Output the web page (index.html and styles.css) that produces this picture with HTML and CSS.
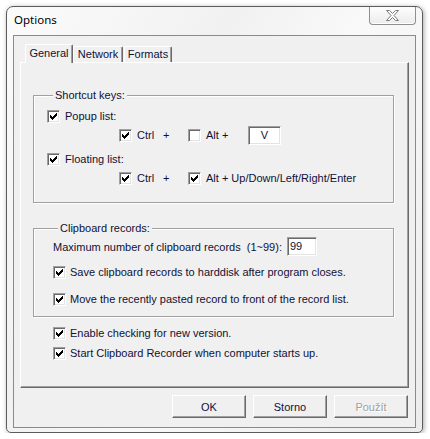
FILE: index.html
```html
<!DOCTYPE html>
<html>
<head>
    <title>Options</title>
    <link rel="stylesheet" href="styles.css">
</head>
<body>
    <div class="window">
        <div class="titlebar">
            <span class="title">Options</span>
            <div class="close">
                <svg width="13" height="11" viewBox="0 0 13 11">
                    <polygon points="0.5,0.5 3.5,0.5 6.5,3.5 9.5,0.5 12.5,0.5 8,5.5 12.5,10.5 9.5,10.5 6.5,7.5 3.5,10.5 0.5,10.5 5,5.5" fill="#fff" stroke="#7a7a7a" stroke-width="1"/>
                </svg>
            </div>
        </div>
        <div class="client">
            <div class="tabs">
                <div class="tab active">General</div>
                <div class="tab t-network">Network</div>
                <div class="tab t-formats">Formats</div>
            </div>
            <div class="panel">
                <fieldset class="group shortcuts">
                    <legend>Shortcut keys:</legend>
                    <div class="row r-popup">
                        <span class="check on"><svg width="7" height="7" viewBox="0 0 7 7"><path d="M0 2h1v3h-1zM1 3h1v3h-1zM2 4h1v3h-1zM3 3h1v3h-1zM4 2h1v3h-1zM5 1h1v3h-1zM6 0h1v3h-1z"/></svg></span>
                        <span class="text">Popup list:</span>
                    </div>
                    <div class="row keys r-keys1">
                        <span class="check on"><svg width="7" height="7" viewBox="0 0 7 7"><path d="M0 2h1v3h-1zM1 3h1v3h-1zM2 4h1v3h-1zM3 3h1v3h-1zM4 2h1v3h-1zM5 1h1v3h-1zM6 0h1v3h-1z"/></svg></span>
                        <span class="text k-ctrl">Ctrl</span>
                        <span class="text k-plus">+</span>
                        <span class="check"></span>
                        <span class="text k-alt">Alt +</span>
                        <span class="edit key-edit">V</span>
                    </div>
                    <div class="row r-floating">
                        <span class="check on"><svg width="7" height="7" viewBox="0 0 7 7"><path d="M0 2h1v3h-1zM1 3h1v3h-1zM2 4h1v3h-1zM3 3h1v3h-1zM4 2h1v3h-1zM5 1h1v3h-1zM6 0h1v3h-1z"/></svg></span>
                        <span class="text">Floating list:</span>
                    </div>
                    <div class="row keys r-keys2">
                        <span class="check on"><svg width="7" height="7" viewBox="0 0 7 7"><path d="M0 2h1v3h-1zM1 3h1v3h-1zM2 4h1v3h-1zM3 3h1v3h-1zM4 2h1v3h-1zM5 1h1v3h-1zM6 0h1v3h-1z"/></svg></span>
                        <span class="text k-ctrl">Ctrl</span>
                        <span class="text k-plus">+</span>
                        <span class="check on"><svg width="7" height="7" viewBox="0 0 7 7"><path d="M0 2h1v3h-1zM1 3h1v3h-1zM2 4h1v3h-1zM3 3h1v3h-1zM4 2h1v3h-1zM5 1h1v3h-1zM6 0h1v3h-1z"/></svg></span>
                        <span class="text">Alt + Up/Down/Left/Right/Enter</span>
                    </div>
                </fieldset>

                <fieldset class="group records">
                    <legend>Clipboard records:</legend>
                    <div class="row r-max">
                        <span class="text max-label">Maximum number of clipboard records&nbsp; (1~99):</span>
                        <span class="edit max-edit">99</span>
                    </div>
                    <div class="row r-save">
                        <span class="check on"><svg width="7" height="7" viewBox="0 0 7 7"><path d="M0 2h1v3h-1zM1 3h1v3h-1zM2 4h1v3h-1zM3 3h1v3h-1zM4 2h1v3h-1zM5 1h1v3h-1zM6 0h1v3h-1z"/></svg></span>
                        <span class="text">Save clipboard records to harddisk after program closes.</span>
                    </div>
                    <div class="row r-move">
                        <span class="check on"><svg width="7" height="7" viewBox="0 0 7 7"><path d="M0 2h1v3h-1zM1 3h1v3h-1zM2 4h1v3h-1zM3 3h1v3h-1zM4 2h1v3h-1zM5 1h1v3h-1zM6 0h1v3h-1z"/></svg></span>
                        <span class="text">Move the recently pasted record to front of the record list.</span>
                    </div>
                </fieldset>

                <div class="row r-enable">
                    <span class="check on"><svg width="7" height="7" viewBox="0 0 7 7"><path d="M0 2h1v3h-1zM1 3h1v3h-1zM2 4h1v3h-1zM3 3h1v3h-1zM4 2h1v3h-1zM5 1h1v3h-1zM6 0h1v3h-1z"/></svg></span>
                    <span class="text">Enable checking for new version.</span>
                </div>
                <div class="row r-start">
                    <span class="check on"><svg width="7" height="7" viewBox="0 0 7 7"><path d="M0 2h1v3h-1zM1 3h1v3h-1zM2 4h1v3h-1zM3 3h1v3h-1zM4 2h1v3h-1zM5 1h1v3h-1zM6 0h1v3h-1z"/></svg></span>
                    <span class="text">Start Clipboard Recorder when computer starts up.</span>
                </div>
            </div>
            <div class="buttons">
                <button class="btn">OK</button>
                <button class="btn">Storno</button>
                <button class="btn" disabled>Použít</button>
            </div>
        </div>
    </div>
</body>
</html>
```

FILE: styles.css
```css
/* Fenêtre de dialogue style Windows */
body {
    margin: 0;
    padding: 0;
    background-color: #fff;
    font-family: 'Liberation Sans', Arial, sans-serif;
    font-size: 11px;
    color: #111135;
}
.window {
    margin: 6px 0 0 6px;
    width: 417px;
    height: 427px;
    box-sizing: border-box;
    border: 1px solid #5c5c5c;
    border-radius: 7px 7px 5px 5px;
    background: linear-gradient(120deg, #fbfbfb 0%, #f1f1f1 35%, #f9f9f9 55%, #ececec 100%);
    box-shadow: 1px 1px 5px rgba(0,0,0,0.35);
    padding: 0 6px 4px 6px;
}
.titlebar {
    height: 28px;
    display: flex;
    justify-content: space-between;
    align-items: flex-start;
}
.title {
    font-family: 'Noto Sans', 'Open Sans', sans-serif;
    font-size: 11.5px;
    color: #000;
    margin: 6px 0 0 1px;
    line-height: 14px;
}
.close {
    width: 47px;
    height: 18px;
    box-sizing: border-box;
    border: 1px solid #8f8f8f;
    border-top: none;
    border-radius: 0 0 4px 4px;
    background: linear-gradient(#fdfdfd, #ececec);
    box-shadow: inset 0 -1px 0 #fff;
    display: flex;
    align-items: center;
    justify-content: center;
}
.client {
    height: 393px;
    box-sizing: border-box;
    border: 1px solid #8a8a8a;
    background-color: #f0f0f0;
    padding: 8px 6px 0 6px;
}
.tabs {
    display: flex;
    align-items: flex-end;
    height: 18px;
}
.tab {
    height: 16px;
    box-sizing: border-box;
    border-top: 1px solid #fff;
    border-left: 1px solid #fff;
    border-right: 1px solid #696969;
    box-shadow: inset -1px 0 0 #a0a0a0;
    border-radius: 2px 2px 0 0;
    text-align: center;
    line-height: 15px;
    background-color: #f0f0f0;
}
.tab.active {
    width: 48px;
    height: 19px;
    margin-left: 5px;
    margin-bottom: -1px;
    line-height: 16px;
    position: relative;
    z-index: 1;
}
.t-network {
    width: 50px;
}
.t-formats {
    width: 48px;
    margin-left: 1px;
}
.panel {
    height: 326px;
    box-sizing: border-box;
    border-top: 1px solid #fff;
    border-left: 1px solid #fff;
    border-right: 1px solid #696969;
    border-bottom: 1px solid #696969;
    box-shadow: inset -1px -1px 0 #a0a0a0;
    overflow: hidden;
}
.group {
    width: 361px;
    box-sizing: border-box;
    margin: 0 0 0 12px;
    padding: 0 0 0 13px;
    border: 1px solid #a0a0a0;
    box-shadow: inset 1px 1px 0 #fff, 1px 1px 0 #fff;
    min-inline-size: 0;
}
.group legend {
    line-height: 14px;
    padding: 0 2px;
    margin-left: 6px;
    background-color: #f0f0f0;
}
.shortcuts {
    margin-top: 25px;
    padding-bottom: 15px;
}
.records {
    margin-top: 18px;
    padding-left: 19px;
    padding-bottom: 8px;
}
.records legend {
    margin-left: 5px;
}
.row {
    display: flex;
    align-items: center;
    height: 18px;
    white-space: nowrap;
}
.check {
    width: 13px;
    height: 13px;
    box-sizing: border-box;
    flex-shrink: 0;
    border-top: 1px solid #a0a0a0;
    border-left: 1px solid #a0a0a0;
    border-bottom: 1px solid #fff;
    border-right: 1px solid #fff;
    box-shadow: inset 1px 1px 0 #696969, inset -1px -1px 0 #e3e3e3;
    background-color: #fff;
    display: flex;
    align-items: center;
    justify-content: center;
    margin-right: 5px;
}
.check svg {
    shape-rendering: crispEdges;
    fill: #000;
}
.edit {
    height: 19px;
    box-sizing: border-box;
    border-top: 1px solid #a0a0a0;
    border-left: 1px solid #a0a0a0;
    border-bottom: 1px solid #fff;
    border-right: 1px solid #fff;
    box-shadow: inset 1px 1px 0 #696969, inset -1px -1px 0 #e3e3e3;
    background-color: #fff;
    line-height: 17px;
    flex-shrink: 0;
}
.r-popup {
    margin-top: 5px;
}
.r-keys1, .r-keys2 {
    margin-top: 1px;
    padding-left: 72px;
}
.r-floating {
    margin-top: 6px;
}
.k-ctrl {
    width: 26px;
}
.k-plus {
    width: 25px;
}
.k-alt {
    width: 42px;
}
.key-edit {
    width: 33px;
    text-align: center;
}
.r-max {
    height: 19px;
    margin-top: 2px;
}
.max-label {
    width: 234px;
}
.max-edit {
    width: 30px;
    padding-left: 2px;
}
.records .check {
    margin-right: 4px;
}
.r-save {
    margin-top: 7px;
}
.r-move {
    margin-top: 9px;
}
.r-enable, .r-start {
    padding-left: 32px;
}
.r-enable .check, .r-start .check {
    margin-right: 4px;
}
.r-enable {
    margin-top: 7px;
}
.r-start {
    margin-top: 2px;
}
.buttons {
    display: flex;
    justify-content: flex-end;
    gap: 7px;
    margin-top: 7px;
    margin-right: 1px;
}
.btn {
    width: 74px;
    height: 23px;
    box-sizing: border-box;
    font-family: 'Liberation Sans', Arial, sans-serif;
    font-size: 11px;
    color: #111135;
    background-color: #f0f0f0;
    border-top: 1px solid #fff;
    border-left: 1px solid #fff;
    border-right: 1px solid #696969;
    border-bottom: 1px solid #696969;
    box-shadow: inset -1px -1px 0 #a0a0a0;
    padding: 0;
}
.btn:disabled {
    color: #a0a0a0;
    text-shadow: 1px 1px 0 #fff;
}
```
